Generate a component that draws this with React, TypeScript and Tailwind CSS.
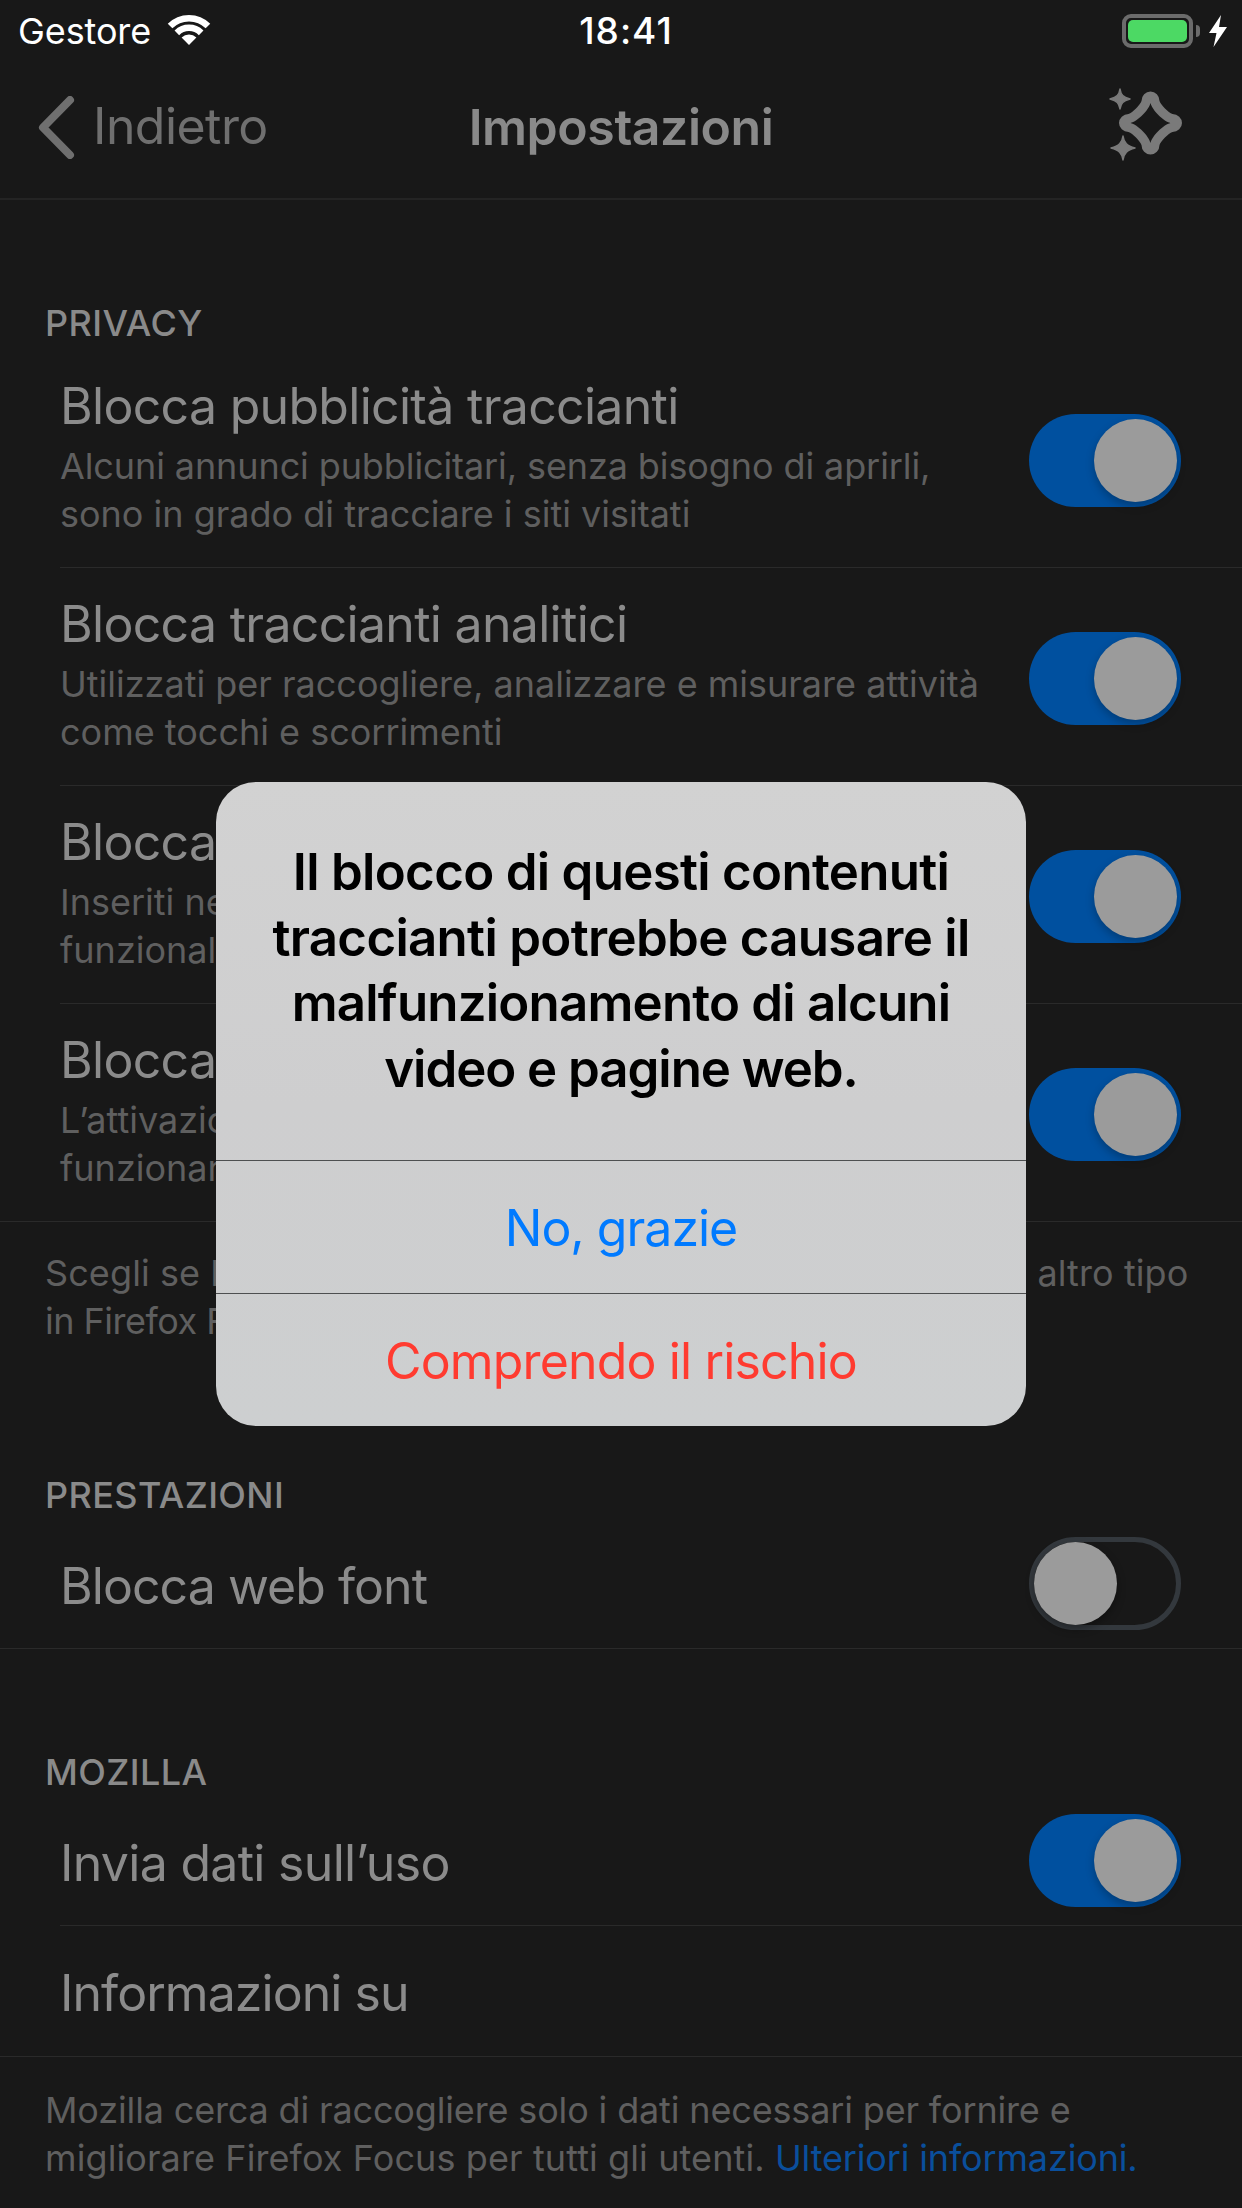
const font = { fontFamily: '"Inter", "Liberation Sans", sans-serif' };

function Toggle({ on = true }: { on?: boolean }) {
  return on ? (
    <div className="relative flex h-[93px] w-[152px] shrink-0 items-center justify-end rounded-full bg-[#00509f] pr-[4px]">
      <div className="h-[83px] w-[83px] rounded-full bg-[#9b9b9b] shadow-[0_4px_8px_rgba(0,0,0,0.25)]" />
    </div>
  ) : (
    <div className="relative flex h-[93px] w-[152px] shrink-0 items-center rounded-full border-[5px] border-[#33383d] bg-[#181818]">
      <div className="h-[83px] w-[83px] rounded-full bg-[#9b9b9b] shadow-[0_4px_8px_rgba(0,0,0,0.35)]" />
    </div>
  );
}

function Row({ title, lines, last, tight }: { title: string; lines: string[]; last?: boolean; tight?: boolean }) {
  return (
    <div className={last ? 'border-b border-[#2a2a2a] h-[218px] pl-[60px]' : 'h-[218px] pl-[60px]'}>
      <div className={last ? 'flex h-full items-start pr-[61px]' : 'flex h-full items-start border-b border-[#2a2a2a] pr-[61px]'}>
        <div className="min-w-0 flex-1 pt-[26px]">
          <div className="h-[60px] whitespace-nowrap text-[50px] leading-[60px] tracking-[-0.7px] text-[#8b8b8b]">{title}</div>
          <div className="mt-[6px] text-[36px] leading-[48px] text-[#5f5f5f]">
            {lines.map((l, i) => (
              <div key={l} className={tight && i === 0 ? 'whitespace-nowrap tracking-[-0.1px]' : 'whitespace-nowrap'}>{l}</div>
            ))}
          </div>
        </div>
        <div className="mt-[64px]">
          <Toggle />
        </div>
      </div>
    </div>
  );
}

function SimpleRow({ title, children, inset, full, h, loose }: { title: string; children?: React.ReactNode; inset?: boolean; full?: boolean; h: string; loose?: boolean }) {
  return (
    <div className={full ? `${h} border-b border-[#2a2a2a] pl-[60px]` : `${h} pl-[60px]`}>
      <div className={inset ? 'flex h-full items-center justify-between border-b border-[#2a2a2a] pr-[61px]' : 'flex h-full items-center justify-between pr-[61px]'}>
        <div className={loose ? 'pt-[4px] text-[50px] leading-[60px] tracking-[-0.7px] text-[#8b8b8b]' : 'pt-[4px] text-[50px] leading-[60px] tracking-[-0.95px] text-[#8b8b8b]'}>{title}</div>
        {children}
      </div>
    </div>
  );
}

function Header({ children, className }: { children: string; className: string }) {
  return (
    <div className={`${className} flex items-end pl-[45px]`}>
      <div className="text-[36px] font-medium leading-[44px] tracking-[0.4px] text-[#8a8a8a]">{children}</div>
    </div>
  );
}

function Sparkles() {
  return (
    <svg width="80" height="76" viewBox="0 0 80 76" className="block">
      <path
        transform="translate(44.5 36)"
        fillRule="evenodd"
        fill="#7a7a7a"
        d="M-9 -22 A9 9.5 0 0 1 9 -22 C10.5 -17.8 17.8 -10.5 22 -9 A9.5 9 0 0 1 22 9 C17.8 10.5 10.5 17.8 9 22 A9 9.5 0 0 1 -9 22 C-10.5 17.8 -17.8 10.5 -22 9 A9.5 9 0 0 1 -22 -9 C-17.8 -10.5 -10.5 -17.8 -9 -22 Z M0 -20 C1.5 -13 13 -1.5 20 0 C13 1.5 1.5 13 0 20 C-1.5 13 -13 1.5 -20 0 C-13 -1.5 -1.5 -13 0 -20 Z"
      />
      <path d="M14 2 C15 8 17 10 24 12 C17 14 15 16 14 22 C13 16 11 14 4 12 C11 10 13 8 14 2 Z" fill="#7a7a7a" stroke="#7a7a7a" strokeWidth="1.5" strokeLinejoin="round" />
      <path d="M17 49 C18 56 21 59 29 61 C21 63 18 66 17 73 C16 66 13 63 5 61 C13 59 16 56 17 49 Z" fill="#7a7a7a" stroke="#7a7a7a" strokeWidth="1.5" strokeLinejoin="round" />
    </svg>
  );
}

export default function App() {
  return (
    <div className="relative h-[2208px] w-[1242px] overflow-hidden bg-[#181818]" style={font}>
      {/* status bar */}
      <div className="flex h-[62px] items-center text-white">
        <div className="flex flex-1 items-center pl-[18px]">
          <span className="text-[36px] leading-[62px] tracking-[-0.1px]">Gestore</span>
          <svg width="44" height="32" viewBox="0 0 44 32" className="ml-[16px] mb-[4px]">
            <path d="M22 32 L14.6 24.6 A10.5 10.5 0 0 1 29.4 24.6 Z" fill="#fff" />
            <path d="M9.84 19.84 A17.2 17.2 0 0 1 34.16 19.84" fill="none" stroke="#fff" strokeWidth="6.5" />
            <path d="M3.05 13.05 A26.8 26.8 0 0 1 40.95 13.05" fill="none" stroke="#fff" strokeWidth="6.5" />
          </svg>
        </div>
        <div className="ml-[7px] text-[37px] font-medium leading-[62px] tracking-[1px]">18:41</div>
        <div className="flex flex-1 items-center justify-end pr-[15px]">
          <div className="flex h-[34px] w-[71px] items-center justify-center rounded-[9px] border-[4px] border-[#6b6b6b]">
            <div className="h-[22px] w-[59px] rounded-[5px] bg-[#4cd964]" />
          </div>
          <div className="ml-[3px] h-[12px] w-[4px] rounded-r-[4px] bg-[#6b6b6b]" />
          <svg width="18" height="32" viewBox="0 0 18 32" className="ml-[9px]">
            <path d="M12 0 L0 18 L7.5 18 L4.5 32 L18 12 L10 12 Z" fill="#fff" />
          </svg>
        </div>
      </div>

      {/* nav bar */}
      <div className="relative flex h-[138px] items-center justify-between border-b-[2px] border-[#242424] pl-[37px] pr-[56px]">
        <div className="flex items-center">
          <svg width="38" height="63" viewBox="0 0 38 63" className="mt-[-6px]">
            <path d="M33 4 L6 31.5 L33 59" fill="none" stroke="#6f6f6f" strokeWidth="8" strokeLinecap="round" strokeLinejoin="round" />
          </svg>
          <span className="ml-[18px] mb-[8px] text-[50px] leading-[60px] tracking-[-0.55px] text-[#6f6f6f]">Indietro</span>
        </div>
        <div className="absolute left-0 right-0 mt-[-6px] text-center text-[50px] font-semibold leading-[60px] tracking-[-0.45px] text-[#8a8a8a]">
          Impostazioni
        </div>
        <div className="mt-[-10px]">
          <Sparkles />
        </div>
      </div>

      {/* privacy */}
      <Header className="h-[150px] pb-[5px]">PRIVACY</Header>
      <Row tight title="Blocca pubblicità traccianti" lines={['Alcuni annunci pubblicitari, senza bisogno di aprirli,', 'sono in grado di tracciare i siti visitati']} />
      <Row title="Blocca traccianti analitici" lines={['Utilizzati per raccogliere, analizzare e misurare attività', 'come tocchi e scorrimenti']} />
      <Row title="Blocca traccianti social" lines={['Inseriti nei siti per monitorare le visite e attivare', 'funzionalità come i pulsanti di condivisione']} />
      <Row title="Blocca altri contenuti traccianti" lines={['L’attivazione potrebbe impedire ad alcuni siti di', 'funzionare correttamente']} last />
      <div className="pl-[45px] pr-[40px] pt-[27px] text-[36px] leading-[48px] text-[#5f5f5f]">
        <div className="whitespace-nowrap tracking-[0.1px]">Scegli se bloccare i traccianti, i cookie e contenuti di ogni altro tipo</div>
        <div className="whitespace-nowrap tracking-[-0.5px]">in Firefox Focus.</div>
      </div>

      {/* prestazioni */}
      <Header className="h-[172px]">PRESTAZIONI</Header>
      <div className="h-[2px]" />
      <SimpleRow title="Blocca web font" full h="h-[130px]">
        <Toggle on={false} />
      </SimpleRow>

      {/* mozilla */}
      <Header className="h-[145px]">MOZILLA</Header>
      <div className="h-[2px]" />
      <SimpleRow loose title="Invia dati sull’uso" inset h="h-[130px]">
        <Toggle />
      </SimpleRow>
      <SimpleRow title="Informazioni su" full h="h-[131px]" />
      <div className="whitespace-nowrap pl-[45px] pt-[29px] text-[36px] leading-[48px] text-[#5f5f5f]">
        <div className="tracking-[-0.15px]">Mozilla cerca di raccogliere solo i dati necessari per fornire e</div>
        <div className="tracking-[0.1px]">
          migliorare Firefox Focus per tutti gli utenti. <span className="tracking-[-0.15px] text-[#0a4f9c]">Ulteriori informazioni.</span>
        </div>
      </div>

      {/* alert */}
      <div className="absolute left-[216px] top-[782px] w-[810px] overflow-hidden rounded-[40px] bg-gradient-to-b from-[#d2d2d2] via-[#cececf] to-[#cdcfd0] text-center">
        <div className="flex h-[379px] items-start justify-center border-b border-[#4d4f50] pt-[57px] text-[51px] font-semibold leading-[65.7px] tracking-[-0.7px] text-black">
          <div>
            Il blocco di questi contenuti
            <br />
            traccianti potrebbe causare il
            <br />
            <span className="tracking-[-0.8px]">malfunzionamento di alcuni</span>
            <br />
            <span className="tracking-[-1.05px]">video e pagine web.</span>
          </div>
        </div>
        <div className="flex h-[133px] items-center justify-center border-b border-[#4d4f50] pt-[2px] text-[50px] leading-[60px] tracking-[-1px] text-[#007aff]">
          No, grazie
        </div>
        <div className="flex h-[132px] items-center justify-center pt-[1px] text-[50px] leading-[60px] tracking-[-0.85px] text-[#ff3b30]">
          Comprendo il rischio
        </div>
      </div>
    </div>
  );
}
